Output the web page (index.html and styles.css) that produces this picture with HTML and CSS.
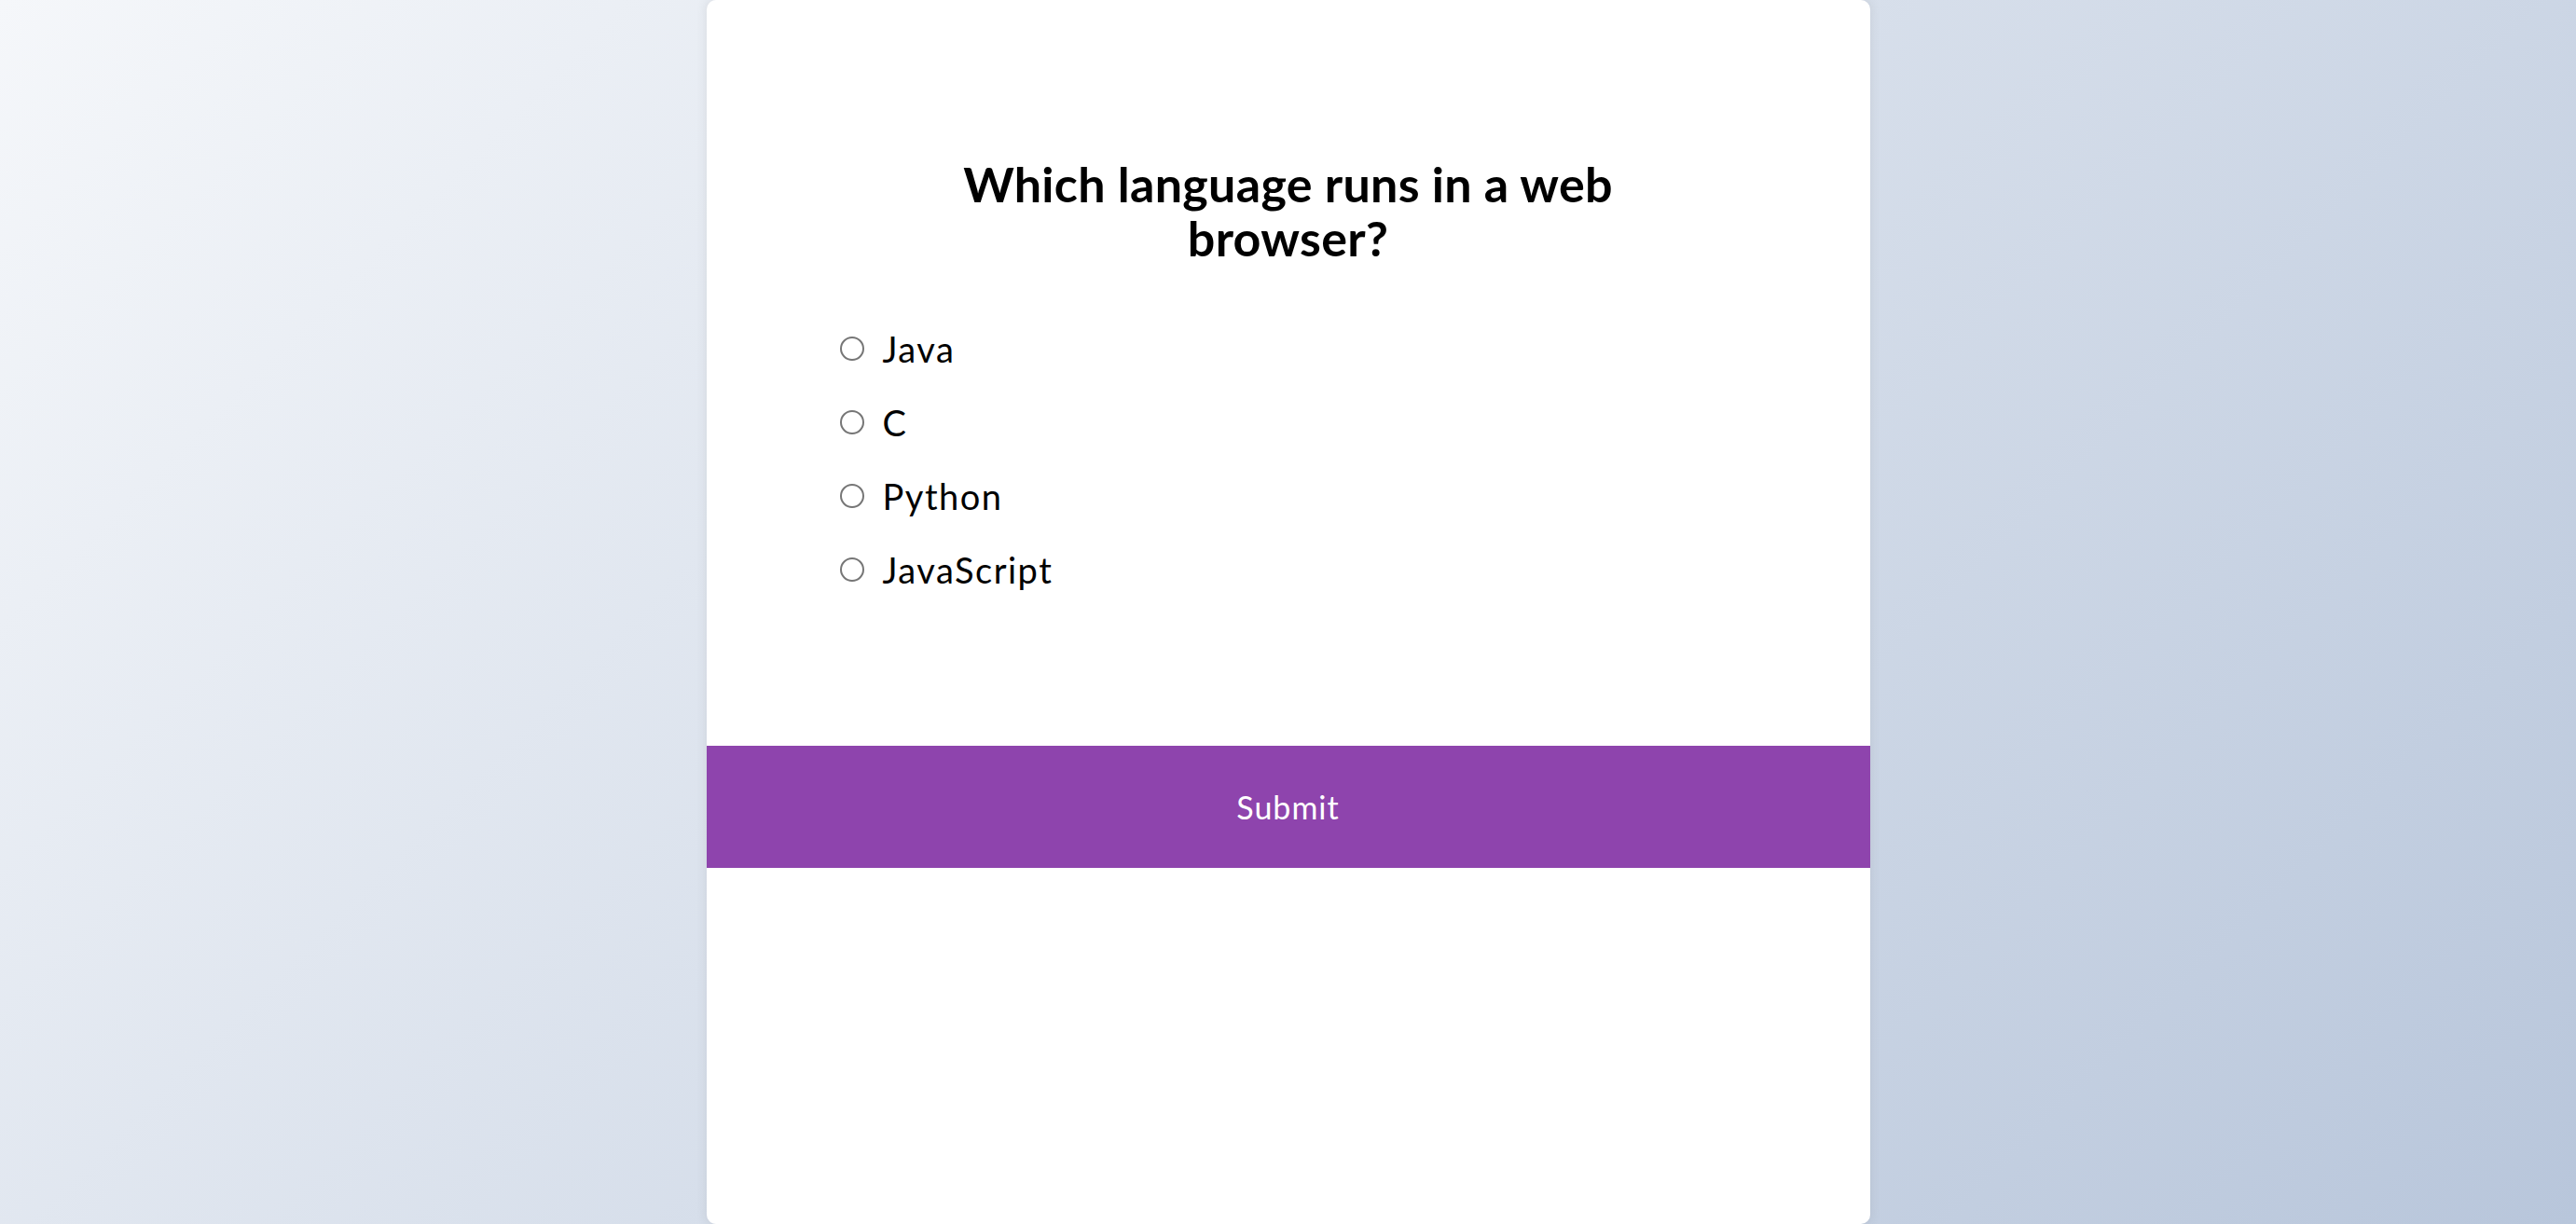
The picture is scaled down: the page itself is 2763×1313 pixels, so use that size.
FILE: index.html
```html
<!DOCTYPE html>
<html lang="en">
<head>
<meta charset="UTF-8">
<title>Quiz</title>
<link rel="stylesheet" href="styles.css">
</head>
<body>
<div class="quiz-container">
  <div class="quiz-header">
    <h2 class="question">Which language runs in a web browser?</h2>
    <ul class="answers">
      <li class="answer"><input type="radio" name="answer" id="a" class="radio"><label for="a">Java</label></li>
      <li class="answer"><input type="radio" name="answer" id="b" class="radio"><label for="b">C</label></li>
      <li class="answer"><input type="radio" name="answer" id="c" class="radio"><label for="c">Python</label></li>
      <li class="answer"><input type="radio" name="answer" id="d" class="radio"><label for="d">JavaScript</label></li>
    </ul>
  </div>
  <button class="submit">Submit</button>
</div>
</body>
</html>
```

FILE: styles.css
```css
* {
  box-sizing: border-box;
}

html, body {
  height: 100%;
}

body {
  margin: 0;
  background: linear-gradient(135deg, #f5f7fa 0%, #b8c6db 100%);
  font-family: "Trebuchet MS", "Lato", "DejaVu Sans", sans-serif;
  display: flex;
  justify-content: center;
}

.quiz-container {
  width: 1248px;
  height: 100%;
  background: #ffffff;
  border-radius: 10px;
  box-shadow: 0 0 10px 2px rgba(100, 100, 100, 0.1);
  overflow: hidden;
}

.quiz-header {
  padding: 168px 143px 0;
}

.question {
  max-width: 740px;
  margin: 0 auto;
  text-align: center;
  font-size: 52px;
  line-height: 58px;
  font-weight: bold;
  letter-spacing: 0.3px;
  color: #000;
}

.answers {
  list-style: none;
  margin: 50px 0 0;
  padding: 0;
}

.answer {
  height: 79px;
  display: flex;
  align-items: center;
  font-size: 38px;
  letter-spacing: 1.5px;
  color: #000;
}

.radio {
  appearance: none;
  -webkit-appearance: none;
  width: 26px;
  height: 26px;
  margin: 0 20px 0 0;
  border: 2px solid #767676;
  border-radius: 50%;
  background: #fff;
  flex: none;
}

.answer label {
  cursor: pointer;
}

.submit {
  display: block;
  width: 100%;
  height: 131px;
  margin-top: 150px;
  border: none;
  background: #8e44ad;
  color: #ffffff;
  font-family: inherit;
  font-size: 34px;
  letter-spacing: 1px;
  cursor: pointer;
}
```
